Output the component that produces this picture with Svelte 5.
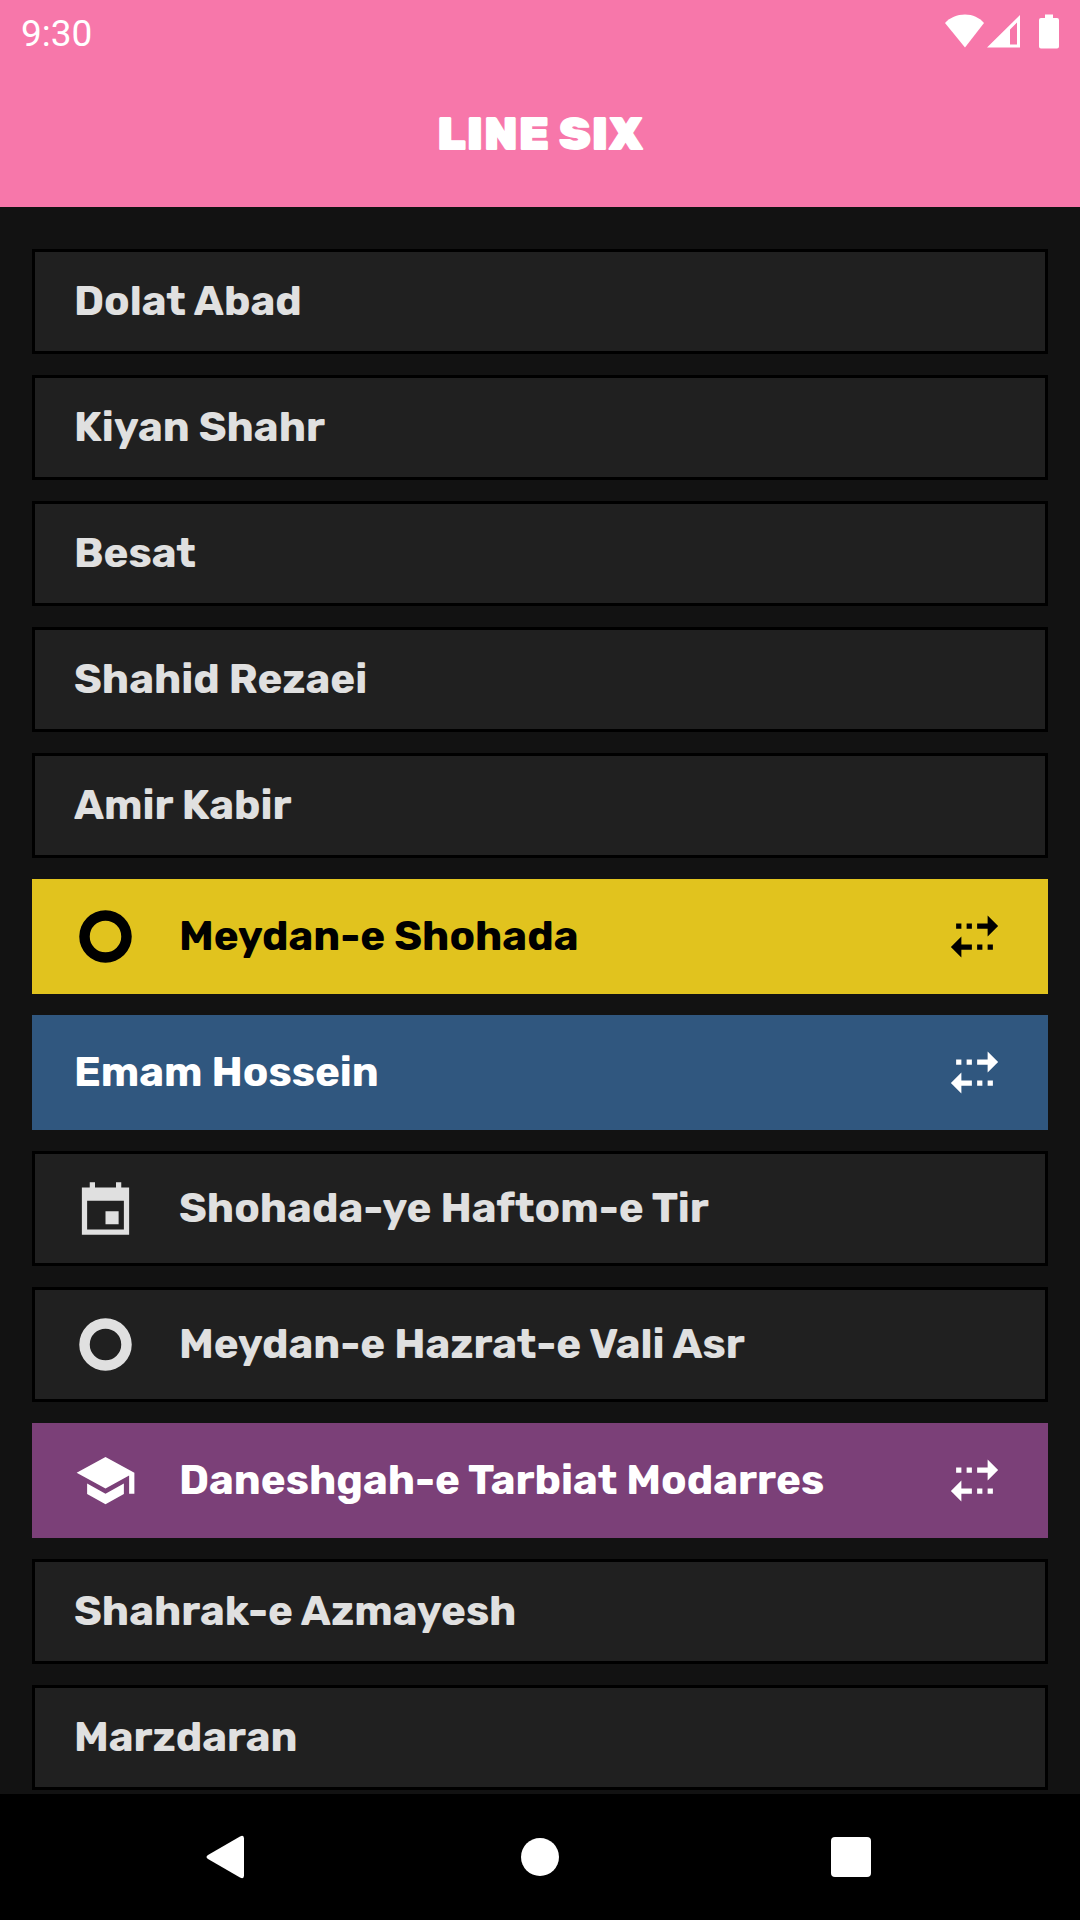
<script>
  const stations = [
    { name: 'Dolat Abad' },
    { name: 'Kiyan Shahr' },
    { name: 'Besat' },
    { name: 'Shahid Rezaei' },
    { name: 'Amir Kabir' },
    { name: 'Meydan-e Shohada', icon: 'ring', tone: 'yellow', transfer: true },
    { name: 'Emam Hossein', tone: 'blue', transfer: true },
    { name: 'Shohada-ye Haftom-e Tir', icon: 'calendar' },
    { name: 'Meydan-e Hazrat-e Vali Asr', icon: 'ring' },
    { name: 'Daneshgah-e Tarbiat Modarres', icon: 'school', tone: 'purple', transfer: true },
    { name: 'Shahrak-e Azmayesh' },
    { name: 'Marzdaran' }
  ];

  const icons = {
    ring: 'M12 2a10 10 0 1 0 0 20 10 10 0 0 0 0-20zm0 16a6 6 0 1 1 0-12 6 6 0 0 1 0 12z',
    calendar: 'M6 2v2H3v18h18V4h-3V2h-2v2H8V2H6zM5 9h14v11H5V9zM12 13v5h5v-5h-5z',
    school: 'M5 13.18v4L12 21l7-3.82v-4L12 17l-7-3.82zM12 3L1 9l11 6 9-4.91V17h2V9L12 3z',
    transfer:
      'M17 4l4 4-4 4V9h-4V7h4V4zM9 7h2v2H9V7zM5 7h2v2H5V7zM7 20l-4-4 4-4v3h4v2H7v3zM13 15h2v2h-2v-2zM17 15h2v2h-2v-2z'
  };
</script>

{#snippet glyph(name)}
  <svg class="icon" viewBox="0 0 24 24" aria-hidden="true">
    <path fill-rule="evenodd" d={icons[name]} />
  </svg>
{/snippet}

<div class="screen">
  <header>
    <div class="status">
      <time>9:30</time>
      <svg class="indicators" viewBox="0 0 115 36" aria-hidden="true">
        <path d="M20 33.500L0 9C5 3.500 12 .5 20 .5S34 3.500 39 9z" />
        <path fill-rule="evenodd" d="M42 33.500L75 1v32.500zM65 30.500h7V8.500l-7 7z" />
        <path d="M100 .5h8v3.500h4a2 2 0 0 1 2 2v26.500a2 2 0 0 1-2 2H96a2 2 0 0 1-2-2V6a2 2 0 0 1 2-2h4z" />
      </svg>
    </div>
    <h1>LINE SIX</h1>
  </header>

  <main>
    <ul>
      {#each stations as station}
        <li>
          <button class="station {station.tone ?? ''}" type="button">
            {#if station.icon}{@render glyph(station.icon)}{/if}
            <span class="name">{station.name}</span>
            {#if station.transfer}{@render glyph('transfer')}{/if}
          </button>
        </li>
      {/each}
    </ul>
  </main>

  <nav>
    <button type="button" aria-label="Back">
      <svg viewBox="0 0 48 48">
        <path d="M4 22L36 3.500Q40 1.500 40 5.500v37Q40 46.500 36 44.500L4 26Q1 24 4 22z" />
      </svg>
    </button>
    <button type="button" aria-label="Home">
      <svg viewBox="0 0 48 48"><circle cx="24" cy="24" r="19" /></svg>
    </button>
    <button type="button" aria-label="Recent apps">
      <svg viewBox="0 0 48 48"><rect x="3" y="4" width="40" height="40" rx="4" /></svg>
    </button>
  </nav>
</div>

<style>
  :global(body) {
    margin: 0;
    background: #121212;
  }

  .screen {
    display: flex;
    flex-direction: column;
    min-height: 100vh;
    background: #121212;
    font-family: Rubik, Inter, sans-serif;
  }

  header {
    background: #f777aa;
    color: #fff;
  }

  .status {
    display: flex;
    align-items: center;
    justify-content: space-between;
    height: 63px;
    padding: 0 20px 0 21px;
  }

  time {
    padding-top: 4px;
    font: 400 37px/59px Roboto, sans-serif;
  }

  .indicators {
    width: 115px;
    height: 36px;
    fill: currentColor;
  }

  h1 {
    margin: 0;
    padding-bottom: 2px;
    font-size: 47px;
    font-weight: 900;
    line-height: 142px;
    text-align: center;
  }

  main {
    flex: 1;
    padding: 42px 32px 0;
  }

  ul {
    display: flex;
    flex-direction: column;
    gap: 21px;
    margin: 0;
    padding: 0;
    list-style: none;
  }

  .station {
    display: flex;
    align-items: center;
    gap: 42px;
    box-sizing: border-box;
    width: 100%;
    padding: 23px 39px;
    border: 3px solid #000;
    background: #202020;
    color: #e0e0e0;
    font: inherit;
    font-size: 42px;
    font-weight: 700;
    line-height: 53px;
    text-align: left;
    cursor: pointer;
  }

  .name {
    flex: 1;
  }

  .icon {
    flex: none;
    width: 63px;
    height: 63px;
    fill: currentColor;
  }

  .yellow {
    border-color: #e1c31e;
    background: #e1c31e;
    color: #000;
  }

  .blue {
    border-color: #30577f;
    background: #30577f;
    color: #fff;
  }

  .purple {
    border-color: #7b4078;
    background: #7b4078;
    color: #fff;
  }

  nav {
    position: sticky;
    bottom: 0;
    display: flex;
    height: 126px;
    padding: 0 72px;
    background: #000;
  }

  nav button {
    display: flex;
    flex: 1;
    align-items: center;
    justify-content: center;
    padding: 0;
    border: 0;
    background: none;
    color: #fff;
    cursor: pointer;
  }

  nav svg {
    width: 48px;
    height: 48px;
    fill: currentColor;
  }
</style>
